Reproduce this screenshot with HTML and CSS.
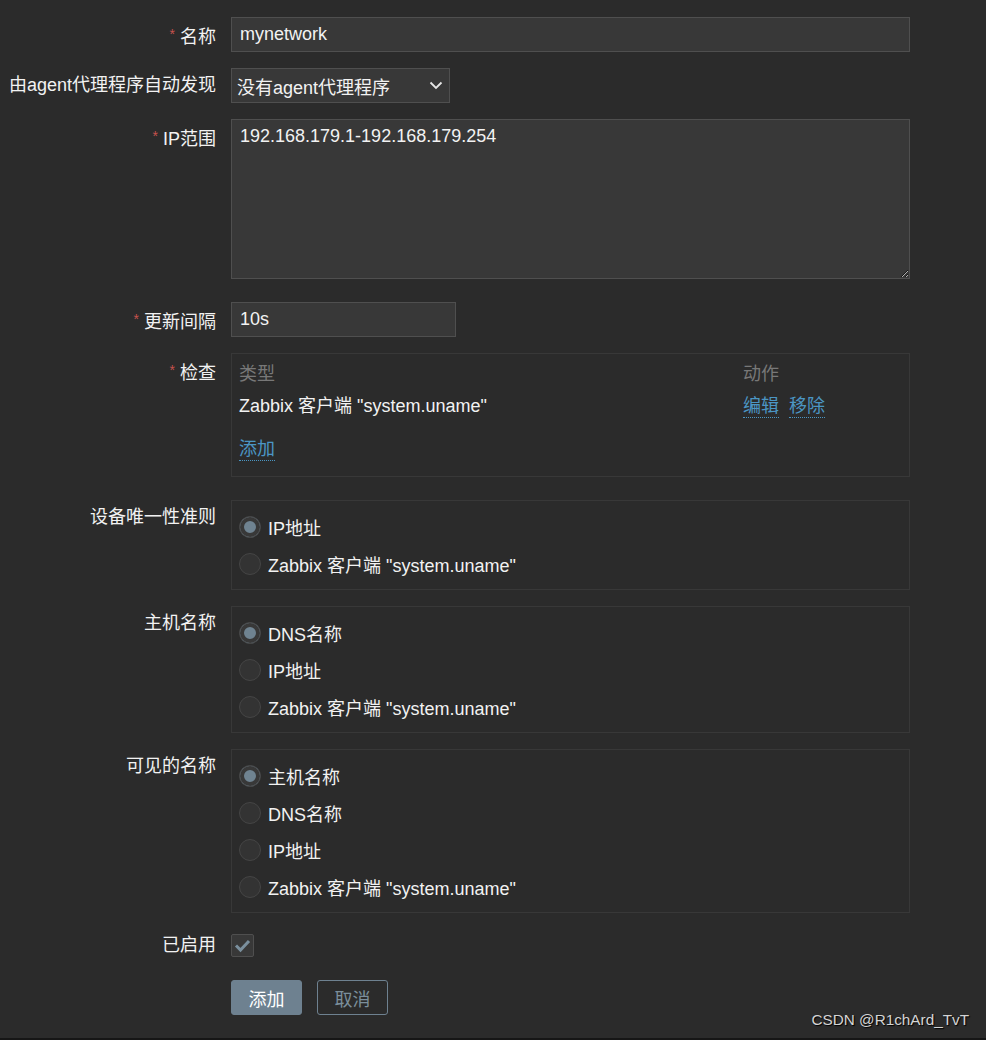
FILE: index.html
```html
<!DOCTYPE html>
<html lang="zh-CN">
<head>
    <meta charset="UTF-8">
    <meta name="viewport" content="width=device-width, initial-scale=1.0">
    <title>自动发现规则</title>
    <link rel="stylesheet" href="styles.css">
</head>
<body class="page">
    <form class="ruleForm">
        <!-- 名称 -->
        <div class="row">
            <label class="rowLabel required">名称</label>
            <input class="textBox wide" type="text" value="mynetwork">
        </div>

        <div class="row">
            <label class="rowLabel">由agent代理程序自动发现</label>
            <div class="selectBox">
                <span>没有agent代理程序</span>
                <svg class="chevron" width="14" height="9" viewBox="0 0 14 9">
                    <polyline points="1.5,1.5 7,7 12.5,1.5" fill="none" stroke="#e6e6e6" stroke-width="1.8"/>
                </svg>
            </div>
        </div>

        <div class="row spaced">
            <label class="rowLabel required">IP范围</label>
            <textarea class="textBox wide areaBox">192.168.179.1-192.168.179.254</textarea>
        </div>

        <div class="row">
            <label class="rowLabel required">更新间隔</label>
            <input class="textBox short" type="text" value="10s">
        </div>

        <!-- checks table -->
        <div class="row spaced">
            <label class="rowLabel required">检查</label>
            <div class="box checkGrid">
                <div class="colHead">类型</div>
                <div class="colHead">动作</div>
                <div class="checkCell">Zabbix 客户端 "system.uname"</div>
                <div class="checkCell">
                    <a class="dotLink" href="#">编辑</a>
                    <a class="dotLink" href="#">移除</a>
                </div>
                <div class="addRow">
                    <a class="dotLink" href="#">添加</a>
                </div>
            </div>
        </div>

        <div class="row">
            <label class="rowLabel">设备唯一性准则</label>
            <div class="box radioList">
                <label class="radioItem"><input class="radio" type="radio" name="uniq" checked>IP地址</label>
                <label class="radioItem"><input class="radio" type="radio" name="uniq">Zabbix 客户端 "system.uname"</label>
            </div>
        </div>

        <div class="row">
            <label class="rowLabel">主机名称</label>
            <div class="box radioList">
                <label class="radioItem"><input class="radio" type="radio" name="host" checked>DNS名称</label>
                <label class="radioItem"><input class="radio" type="radio" name="host">IP地址</label>
                <label class="radioItem"><input class="radio" type="radio" name="host">Zabbix 客户端 "system.uname"</label>
            </div>
        </div>

        <div class="row enabledGap">
            <label class="rowLabel">可见的名称</label>
            <div class="box radioList">
                <label class="radioItem"><input class="radio" type="radio" name="visible" checked>主机名称</label>
                <label class="radioItem"><input class="radio" type="radio" name="visible">DNS名称</label>
                <label class="radioItem"><input class="radio" type="radio" name="visible">IP地址</label>
                <label class="radioItem"><input class="radio" type="radio" name="visible">Zabbix 客户端 "system.uname"</label>
            </div>
        </div>

        <div class="row spaced centerRow">
            <label class="rowLabel smallLabel">已启用</label>
            <span class="checkBox">
                <svg width="21" height="21" viewBox="0 0 21 21">
                    <polyline points="4,10.5 8.5,15 17,6" fill="none" stroke="#7a8f9d" stroke-width="3"/>
                </svg>
            </span>
        </div>

        <div class="row">
            <span class="rowLabel"></span>
            <div class="buttons">
                <button class="btn mainBtn" type="button">添加</button>
                <button class="btn altBtn" type="button">取消</button>
            </div>
        </div>
    </form>

    <div class="watermark">CSDN @R1chArd_TvT</div>
</body>
</html>
```

FILE: styles.css
```css
body {
    margin: 0;
    background-color: #2b2b2b;
    color: #f2f2f2;
    font-family: "Liberation Sans", Arial, "Noto Sans CJK SC", sans-serif;
    font-size: 18px;
}

.page {
    position: relative;
    box-sizing: border-box;
    height: 1040px;
    border-bottom: 2px solid #161616;
}

.ruleForm {
    padding-top: 17px;
}

.row {
    display: flex;
    align-items: flex-start;
    column-gap: 15px;
    margin-bottom: 16px;
}
.spaced {
    margin-bottom: 23px;
}
.enabledGap {
    margin-bottom: 21px;
}
.centerRow {
    align-items: center;
}

.rowLabel {
    flex: none;
    width: 216px;
    height: 35px;
    text-align: right;
    line-height: 35px;
    white-space: nowrap;
}
.smallLabel {
    height: 23px;
    line-height: 23px;
}
.required::before {
    content: "*";
    color: #c8524d;
    font-size: 14px;
    vertical-align: 4px;
    margin-right: 5px;
}

.textBox {
    display: block;
    box-sizing: border-box;
    height: 35px;
    margin: 0;
    padding: 0 8px;
    background-color: #383838;
    border: 1px solid #4f4f4f;
    color: #f2f2f2;
    font: inherit;
    outline: none;
}
.wide {
    width: 679px;
}
.short {
    width: 225px;
}
.areaBox {
    height: 160px;
    padding: 5px 8px;
    line-height: 22px;
    resize: vertical;
    color-scheme: dark;
}

.selectBox {
    box-sizing: border-box;
    display: flex;
    align-items: center;
    justify-content: space-between;
    width: 219px;
    height: 35px;
    padding: 0 6px 0 5px;
    background-color: #383838;
    border: 1px solid #4f4f4f;
}

.box {
    box-sizing: border-box;
    width: 679px;
    border: 1px solid #383838;
    padding: 7px;
}

.checkGrid {
    display: grid;
    grid-template-columns: 1fr 159px;
}
.colHead {
    height: 26px;
    line-height: 26px;
    color: #787878;
}
.checkCell {
    height: 38px;
    line-height: 38px;
}
.addRow {
    grid-column: 1 / 3;
    height: 38px;
    padding-top: 6px;
    line-height: 36px;
}
.dotLink {
    display: inline-block;
    line-height: 21px;
    color: #4b96c4;
    text-decoration: none;
    border-bottom: 1px dotted #4b96c4;
    margin-right: 5px;
}

.radioList {
    display: flex;
    flex-direction: column;
}
.radioItem {
    display: flex;
    align-items: center;
    column-gap: 7px;
    height: 37px;
}
.radio {
    appearance: none;
    box-sizing: border-box;
    width: 22px;
    height: 22px;
    margin: 0;
    border-radius: 50%;
    border: 1px solid #454545;
    background-color: #333333;
}
.radio:checked {
    background-color: #6f8391;
    box-shadow: inset 0 0 0 4px #383838;
}

.checkBox {
    box-sizing: border-box;
    display: flex;
    align-items: center;
    justify-content: center;
    width: 23px;
    height: 23px;
    background-color: #383838;
    border: 1px solid #4f4f4f;
    border-radius: 2px;
}

.buttons {
    display: flex;
    column-gap: 15px;
}
.btn {
    box-sizing: border-box;
    height: 35px;
    width: 71px;
    padding: 0;
    border-radius: 3px;
    font: inherit;
}
.mainBtn {
    background-color: #6e8190;
    border: 1px solid #6e8190;
    color: #ffffff;
}
.altBtn {
    background-color: transparent;
    border: 1px solid #6e8190;
    color: #7b8f9c;
}

.watermark {
    position: absolute;
    right: 17px;
    bottom: 9px;
    font-size: 15.3px;
    color: #d4d4d4;
    text-shadow: 1px 1px 1px #000000;
}
```
